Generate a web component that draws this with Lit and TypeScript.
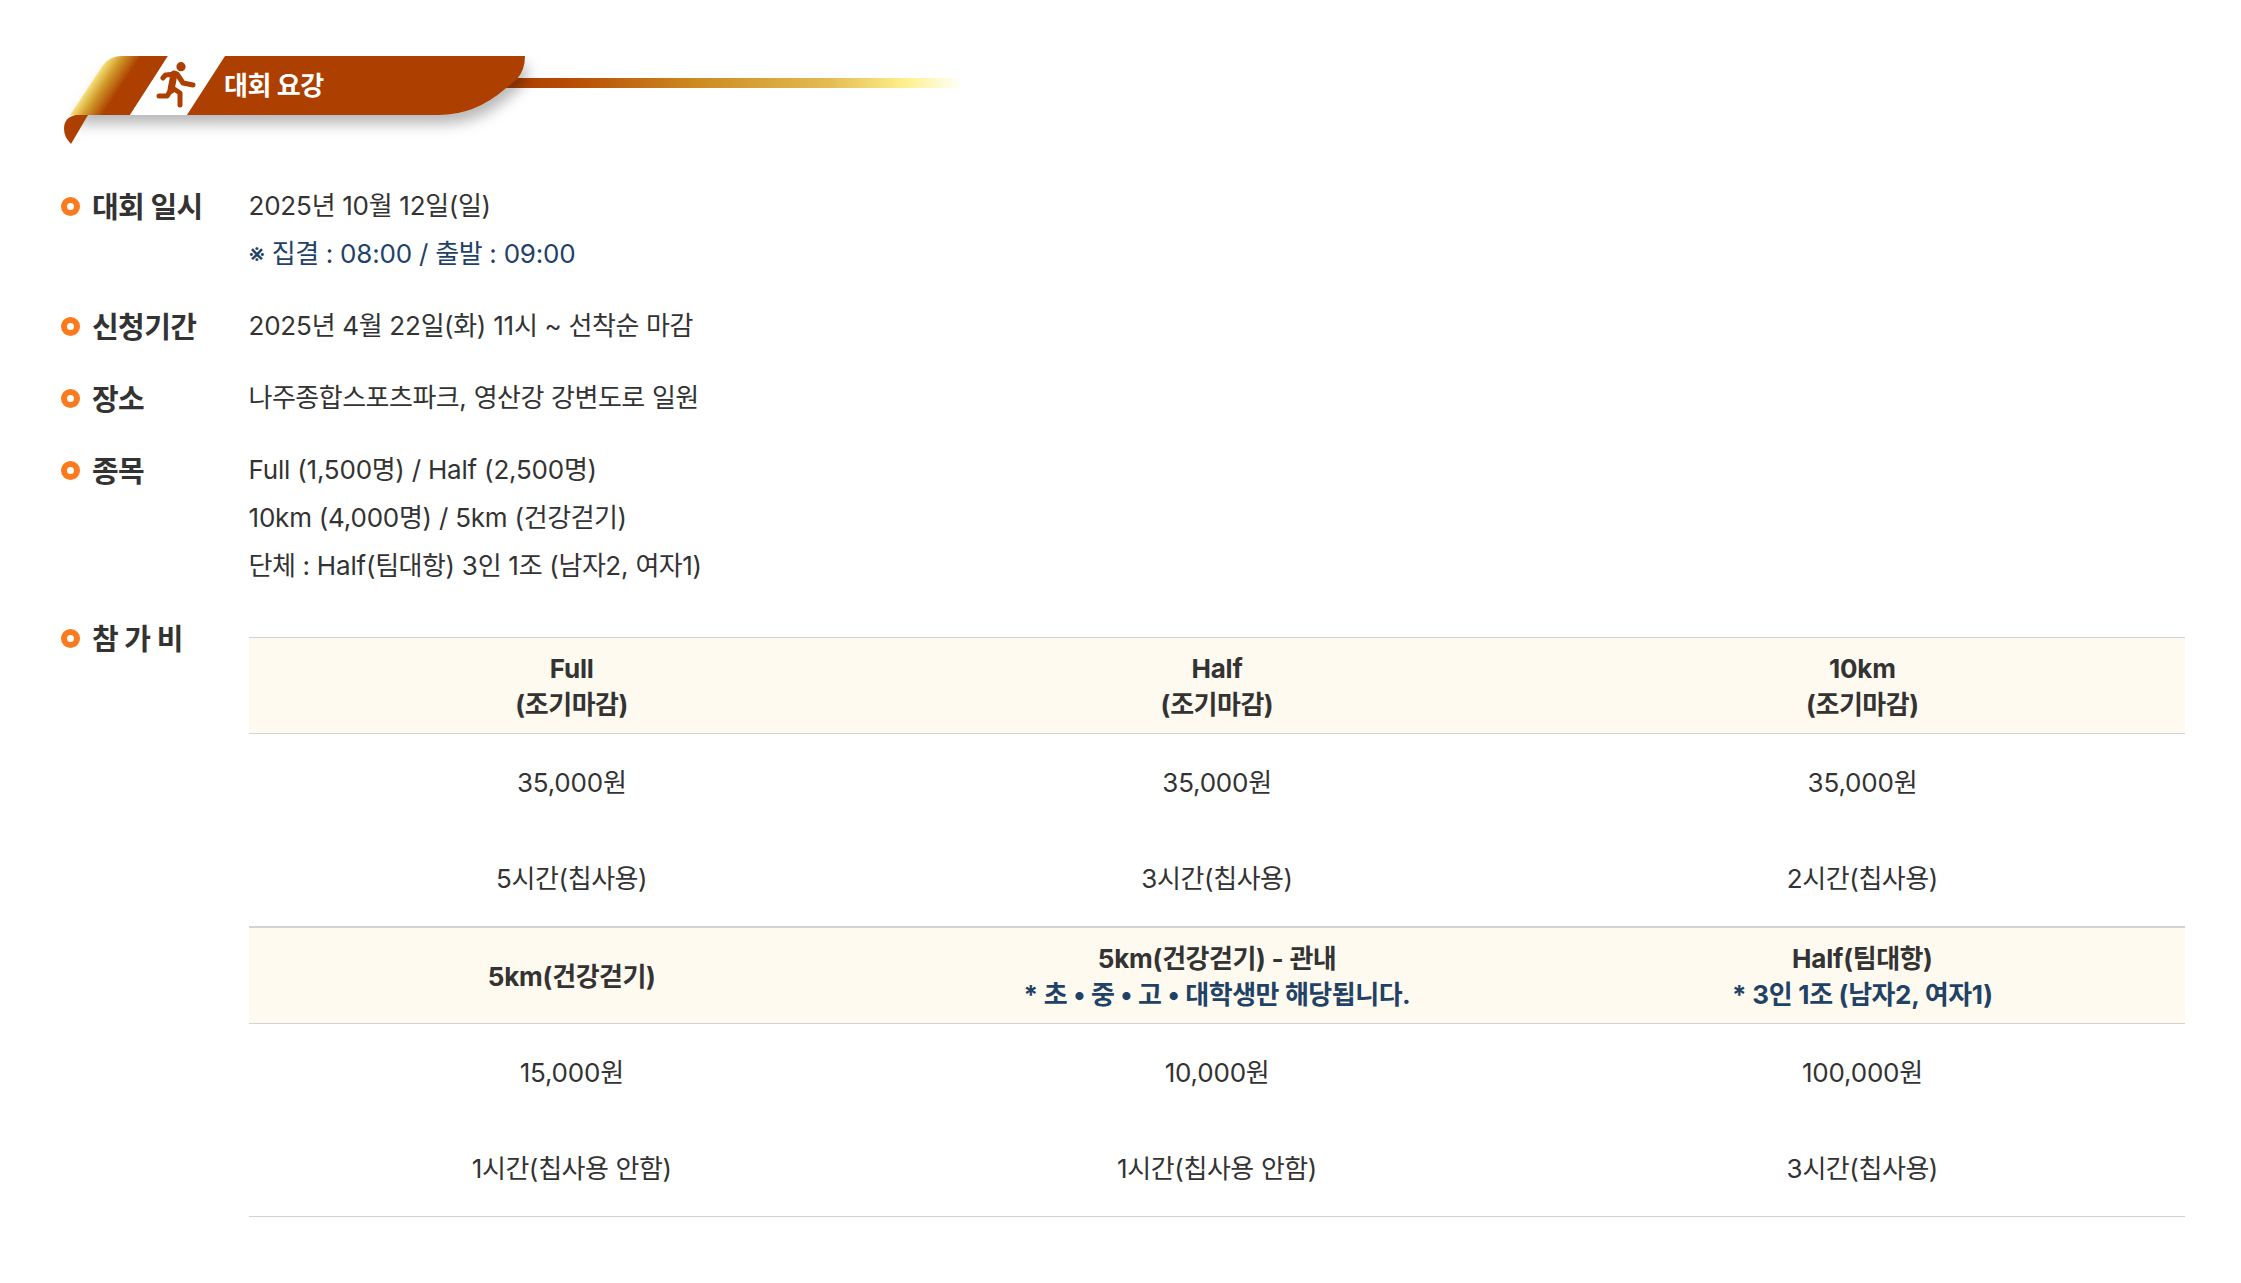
import { LitElement, html, css, svg } from "lit";
import { customElement } from "lit/decorators.js";

const banner = svg`
<svg class="banner" width="910" height="98" viewBox="61 56 910 98" xmlns="http://www.w3.org/2000/svg">
  <defs>
    <linearGradient id="line" x1="517" y1="0" x2="963" y2="0" gradientUnits="userSpaceOnUse">
      <stop offset="0" stop-color="#ad4000"/>
      <stop offset="0.12" stop-color="#b84c04"/>
      <stop offset="0.4" stop-color="#cc8a20"/>
      <stop offset="0.7" stop-color="#e3bc52"/>
      <stop offset="0.87" stop-color="#fff08c"/>
      <stop offset="1" stop-color="#fff08c" stop-opacity="0"/>
    </linearGradient>
    <linearGradient id="gold" x1="85" y1="88" x2="111" y2="105" gradientUnits="userSpaceOnUse">
      <stop offset="0" stop-color="#fff08c"/>
      <stop offset="0.45" stop-color="#d09a2a"/>
      <stop offset="0.95" stop-color="#ad4000"/>
    </linearGradient>
    <filter id="sh" x="-10%" y="-30%" width="120%" height="170%">
      <feDropShadow dx="3" dy="9" stdDeviation="7" flood-color="#000" flood-opacity="0.28"/>
    </filter>
  </defs>
  <rect x="500" y="78" width="463" height="10" fill="url(#line)"/>
  <g filter="url(#sh)">
    <path d="M70 115 L103 65 Q110 56 122 56 L168 56 L130 115 Z" fill="url(#gold)"/>
    <path d="M168 56 L225 56 L187 115 L130 115 Z" fill="#fff"/>
    <path d="M225 56 L525 56 Q525 70 517 79 L505 89 Q475 115 439 115 L187 115 Z" fill="#ad4000"/>
  </g>
  <path d="M88 115 L76 115 Q64 117 64 129 Q64 137 71 144 Z" fill="#ad4000"/>
  <circle cx="181" cy="66.7" r="4.6" fill="#ad4000"/>
  <g fill="none" stroke="#ad4000" stroke-width="5" stroke-linecap="round" stroke-linejoin="round">
    <path d="M162.8 78 L165.5 75 L177 74 L183 83 L193 85"/>
    <path d="M174 74 L171 90" stroke-width="7"/>
    <path d="M171 87 L180 93 L180 105"/>
    <path d="M171 90 L167 96 L159 96"/>
  </g>
  <text x="224" y="95" class="bt">대회 요강</text>
</svg>`;

/** Latin runs get different tracking from the Hangul around them. */
function t(text: string) {
  return text
    .split(/([\x00-\x7f]+)/)
    .filter((s) => s)
    .map((s) => (/^[\x00-\x7f]/.test(s) ? html`<span class="lat">${s}</span>` : s));
}

@customElement("app-root")
export class AppRoot extends LitElement {
  static styles = css`
    :host {
      display: block;
      min-height: 1283px;
      background: #fff;
      color: #333;
      font-family: Inter, "Noto Sans CJK KR", sans-serif;
      font-size: 26px;
      letter-spacing: -0.5px;
      box-sizing: border-box;
      padding: 56px 56px 0 61px;
    }
    .banner { display: block; }
    .bt { font: 700 26px Inter, "Noto Sans CJK KR", sans-serif; fill: #fff; letter-spacing: -0.4px; }
    .lat { letter-spacing: -0.2px; }
    .info { margin-top: 28px; display: flex; flex-direction: column; gap: 24px; }
    .row { display: grid; grid-template-columns: 187.5px 1fr; }
    .label { display: flex; align-items: center; gap: 12px; height: 46px; font-size: 29px; font-weight: 700; color: #333; letter-spacing: -0.6px; }
    .dot { width: 19px; height: 19px; margin-top: 2px; box-sizing: border-box; border: 6px solid #fb7a1e; border-radius: 50%; flex: none; }
    .val { line-height: 48px; }
    .note { color: #1f4266; }
    table { width: 100%; border-collapse: separate; border-spacing: 0; table-layout: fixed; }
    th, td { text-align: center; box-sizing: border-box; }
    th { background: #fffaef; font-weight: 700; line-height: 36px; height: 97px; padding: 2px 0 0; border-top: 1px solid #d3d3d3; border-bottom: 1px solid #d3d3d3; }
    td { height: 96px; padding: 0 0 4px; }
    tr.end td { height: 97px; border-bottom: 1px solid #d3d3d3; }
    .fee { padding: 23px 0 0 0.5px; }
  `;

  private head(items: [string, string, boolean?][]) {
    return html`<tr>${items.map(
      ([a, b, n]) => html`<th>${t(a)}${b ? html`<br /><span class=${n ? "note" : ""}>${t(b)}</span>` : ""}</th>`
    )}</tr>`;
  }
  private cells(items: string[], end = false) {
    return html`<tr class=${end ? "end" : ""}>${items.map((c) => html`<td>${t(c)}</td>`)}</tr>`;
  }

  render() {
    const line = (label: string, body: unknown) => html`
      <div class="row"><div class="label"><span class="dot"></span>${label}</div><div class="val">${body}</div></div>`;
    return html`
      ${banner}
      <div class="info">
        ${line("대회 일시", html`${t("2025년 10월 12일(일)")}<br /><span class="note">※${t(" 집결 : 08:00 / 출발 : 09:00")}</span>`)}
        ${line("신청기간", t("2025년 4월 22일(화) 11시 ~ 선착순 마감"))}
        ${line("장소", t("나주종합스포츠파크, 영산강 강변도로 일원"))}
        ${line("종목", html`${t("Full (1,500명) / Half (2,500명)")}<br />${t("10km (4,000명) / 5km (건강걷기)")}<br />${t("단체 : Half(팀대항) 3인 1조 (남자2, 여자1)")}`)}
        <div class="row">
          <div class="label"><span class="dot"></span>참 가 비</div>
          <div class="fee">
            <table>
              ${this.head([["Full", "(조기마감)"], ["Half", "(조기마감)"], ["10km", "(조기마감)"]])}
              ${this.cells(["35,000원", "35,000원", "35,000원"])}
              ${this.cells(["5시간(칩사용)", "3시간(칩사용)", "2시간(칩사용)"], true)}
              ${this.head([["5km(건강걷기)", ""], ["5km(건강걷기) - 관내", "* 초 • 중 • 고 • 대학생만 해당됩니다.", true], ["Half(팀대항)", "* 3인 1조 (남자2, 여자1)", true]])}
              ${this.cells(["15,000원", "10,000원", "100,000원"])}
              ${this.cells(["1시간(칩사용 안함)", "1시간(칩사용 안함)", "3시간(칩사용)"], true)}
            </table>
          </div>
        </div>
      </div>
    `;
  }
}
